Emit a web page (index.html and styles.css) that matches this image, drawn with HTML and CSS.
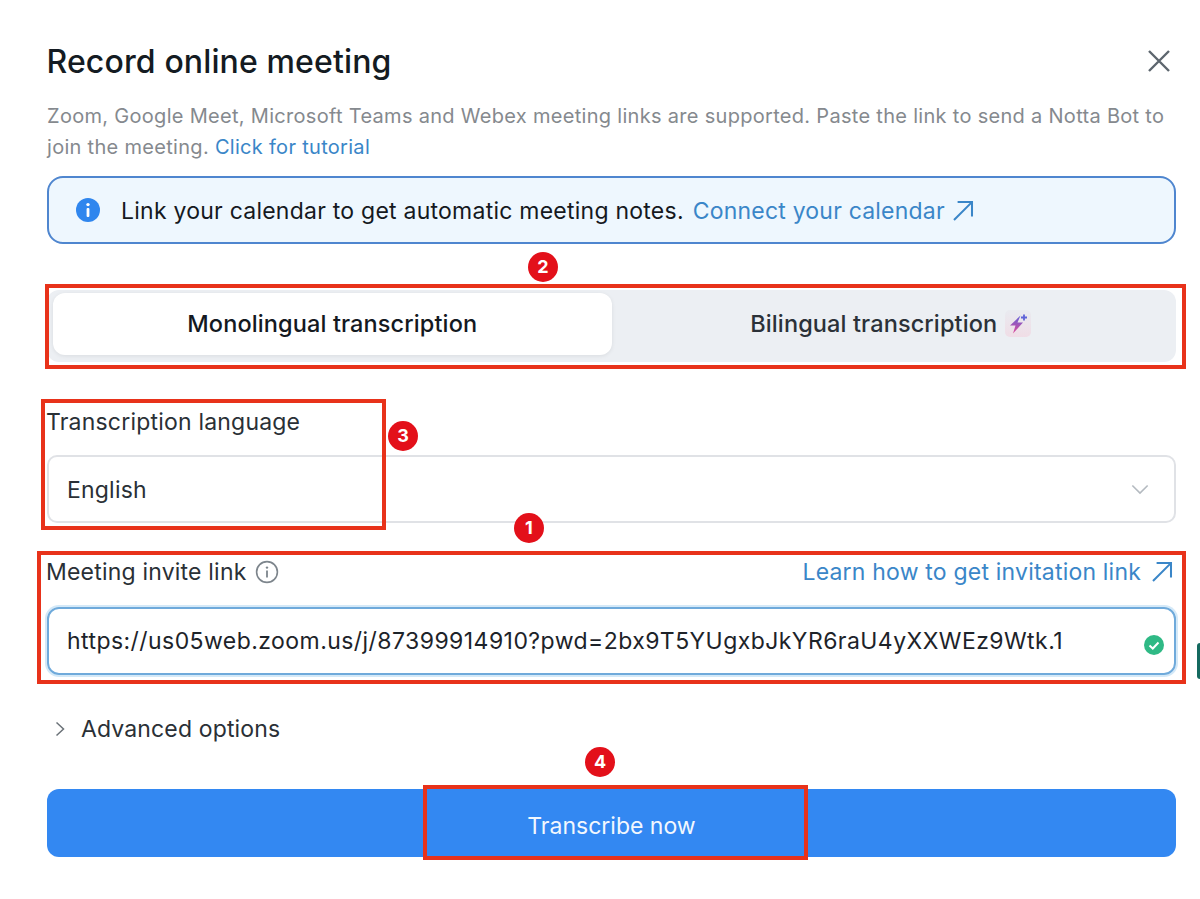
FILE: index.html
```html
<!DOCTYPE html>
<html lang="en">
<head>
    <meta charset="UTF-8">
    <title>Record online meeting</title>
    <link rel="stylesheet" href="styles.css">
</head>
<body>
    <div class="dialog">
        <div class="dialog-head">
            <h1>Record online meeting</h1>
            <svg class="close-icon" width="24" height="24" viewBox="0 0 24 24"><path d="M2 2L22 22M22 2L2 22" fill="none" stroke="#5d666e" stroke-width="2.4"/></svg>
        </div>
        <p class="intro">Zoom, Google Meet, Microsoft Teams and Webex meeting links are supported. Paste the link to send a Notta Bot to join the meeting. <a href="#">Click for tutorial</a></p>

        <div class="notice">
            <svg class="notice-icon" width="24" height="24" viewBox="0 0 24 24"><circle cx="12" cy="12" r="12" fill="#2f86ee"/><rect x="10.6" y="10" width="2.8" height="9" rx="1" fill="#fff"/><circle cx="12" cy="6.6" r="1.7" fill="#fff"/></svg>
            <span>Link your calendar to get automatic meeting notes.</span>
            <a href="#" class="link-arrow">Connect your calendar
                <svg width="24" height="24" viewBox="0 0 20 20"><path d="M2.5 17.5L17 3M5.5 2.5H17.5V14.5" fill="none" stroke="currentColor" stroke-width="1.7"/></svg>
            </a>
        </div>

        <div class="tabs">
            <div class="tab active">Monolingual transcription</div>
            <div class="tab">Bilingual transcription
                <span class="spark">
                    <svg width="22" height="22" viewBox="0 0 22 22">
                        <defs><linearGradient id="boltFill" x1="0" y1="0" x2="0" y2="1"><stop offset="0" stop-color="#5f63d8"/><stop offset="1" stop-color="#e0489a"/></linearGradient></defs>
                        <path d="M13.5 3.5L3 13.5H8.5L6 21.5L16 10.5H10.5Z" fill="url(#boltFill)"/>
                        <path d="M17 2.5V8.5M14 5.5H20" stroke="#5f63d8" stroke-width="1.8" fill="none"/>
                    </svg>
                </span>
            </div>
        </div>

        <div class="field lang-field">
            <label>Transcription language</label>
            <div class="select">
                <span>English</span>
                <svg width="18" height="11" viewBox="0 0 20 12"><path d="M1.5 1.5L10 10L18.5 1.5" fill="none" stroke="#b4bac0" stroke-width="1.8"/></svg>
            </div>
        </div>

        <div class="field link-field">
            <div class="label-row">
                <label>Meeting invite link
                    <svg width="24" height="24" viewBox="0 0 24 24"><circle cx="12" cy="12" r="10.4" fill="none" stroke="#7d858c" stroke-width="1.6"/><rect x="11.1" y="10.5" width="1.8" height="7" fill="#7d858c"/><circle cx="12" cy="7.6" r="1.2" fill="#7d858c"/></svg>
                </label>
                <a href="#" class="link-arrow">Learn how to get invitation link
                    <svg width="24" height="24" viewBox="0 0 20 20"><path d="M2.5 17.5L17 3M5.5 2.5H17.5V14.5" fill="none" stroke="currentColor" stroke-width="1.7"/></svg>
                </a>
            </div>
            <div class="link-input">
                <span>https://us05web.zoom.us/j/87399914910?pwd=2bx9T5YUgxbJkYR6raU4yXXWEz9Wtk.1</span>
                <svg class="ok-icon" width="20" height="20" viewBox="0 0 20 20"><circle cx="10" cy="10" r="10" fill="#2fb985"/><path d="M5.5 10.5L8.8 13.5L14.5 7.5" fill="none" stroke="#fff" stroke-width="2"/></svg>
            </div>
        </div>

        <div class="advanced">
            <svg width="10" height="16" viewBox="0 0 10 16"><path d="M1.5 1.5L8.5 8L1.5 14.5" fill="none" stroke="#6b7278" stroke-width="1.5"/></svg>
            <span>Advanced options</span>
        </div>

        <button class="submit-btn">Transcribe now</button>
    </div>

    <!-- annotations drawn on top of the screenshot -->
    <div class="mark mark-tabs"></div>
    <div class="mark mark-lang"></div>
    <div class="mark mark-link"></div>
    <div class="mark mark-btn"></div>
    <div class="badge badge-2">2</div>
    <div class="badge badge-3">3</div>
    <div class="badge badge-1">1</div>
    <div class="badge badge-4">4</div>
    <div class="edge-sliver"></div>
</body>
</html>
```

FILE: styles.css
```css
html, body { margin: 0; padding: 0; background: #fff; }
body { font-family: Inter, "Liberation Sans", sans-serif; color: #1a2026; overflow: hidden; height: 899px; position: relative; letter-spacing: 0.2px; }
a { color: #3a86c8; text-decoration: none; }

.dialog { width: 1129px; margin-left: 47px; padding-top: 42px; }
.dialog-head { display: flex; justify-content: space-between; align-items: center; height: 40px; }
.dialog-head h1 { margin: 0 0 0 -0.5px; font-size: 32px; font-weight: 500; line-height: 40px; letter-spacing: 0.13px; color: #141b22; }
.close-icon { margin: -2px 5px 0 0; }

.intro { margin: 19px 0 0; font-size: 20px; line-height: 31px; color: #85898e; letter-spacing: 0.3px; }

.notice { display: flex; align-items: center; box-sizing: border-box; height: 68px; margin-top: 13px; padding: 2px 0 0 27px; border: 2px solid #4f86cf; border-radius: 16px; background: #eef7fe; font-size: 23px; letter-spacing: 0.24px; color: #15191e; }
.notice-icon { margin: -2px 21px 0 0; flex: none; }
.notice .link-arrow { margin-left: 9px; letter-spacing: 0.2px; gap: 6px; }
.link-arrow { display: inline-flex; align-items: center; gap: 9px; }

.tabs { display: flex; height: 62px; margin-top: 46px; padding: 3px 6px 7px; background: #eceff3; border-radius: 12px; }
.tab { flex: 1; display: flex; align-items: center; justify-content: center; gap: 8px; padding-bottom: 2px; font-size: 23.5px; font-weight: 500; letter-spacing: 0.12px; border-radius: 12px; color: #2b3138; }
.tab.active { background: #fff; color: #14191f; box-shadow: 0 1px 4px rgba(0, 0, 0, 0.08); }
.spark { display: flex; align-items: center; justify-content: center; width: 26px; height: 27px; background: linear-gradient(#e9ebf0, #f0dde6); border-radius: 5px; }

.field label { display: flex; align-items: center; gap: 8px; margin-left: -1px; padding-top: 1px; font-size: 23px; line-height: 30px; color: #2a3036; }
.lang-field { margin-top: 44px; }
.select { display: flex; justify-content: space-between; align-items: center; height: 64px; margin-top: 18px; padding: 0 25px 0 18px; border: 2px solid #e0e2e6; border-radius: 10px; font-size: 23px; color: #2a3036; }
.select span { padding-top: 2px; }

.link-field { margin-top: 33px; }
.label-row { display: flex; justify-content: space-between; align-items: center; padding-right: 2px; }
.label-row .link-arrow { font-size: 23px; }
.link-input { display: flex; justify-content: space-between; align-items: center; height: 64px; margin-top: 20px; padding: 0 10px 0 18px; border: 2px solid #6faadb; border-radius: 12px; box-shadow: 0 0 0 2px #d4e9f8; font-size: 23px; letter-spacing: 0.44px; color: #1d2329; }
.ok-icon { margin-top: 8px; }

.advanced { display: flex; align-items: center; gap: 16px; margin-top: 39px; padding-left: 8px; font-size: 23px; line-height: 30px; letter-spacing: 0.14px; color: #2a3036; }

.submit-btn { display: block; width: 100%; height: 68px; margin-top: 45px; padding-top: 6px; border: none; border-radius: 12px; background: #3388f2; color: #f2f7fe; font-family: inherit; font-size: 23px; letter-spacing: 0; }

.mark { position: absolute; box-sizing: border-box; border: 4px solid #e8321a; }
.mark-tabs { left: 45px; top: 284px; width: 1141px; height: 85px; }
.mark-lang { left: 41px; top: 399px; width: 345px; height: 131px; }
.mark-link { left: 37px; top: 551px; width: 1149px; height: 133px; }
.mark-btn { left: 423px; top: 785px; width: 385px; height: 75px; }

.badge { position: absolute; width: 30px; height: 30px; line-height: 30px; border-radius: 50%; background: #e3101a; color: #fff; font-size: 18px; font-weight: 700; letter-spacing: 0; text-align: center; }
.badge-2 { left: 528px; top: 252px; }
.badge-3 { left: 388px; top: 421px; }
.badge-1 { left: 514px; top: 513px; }
.badge-4 { left: 585px; top: 747px; }

.edge-sliver { position: absolute; left: 1197px; top: 643px; width: 3px; height: 36px; background: #14695f; border-radius: 3px 0 0 3px; }
```
